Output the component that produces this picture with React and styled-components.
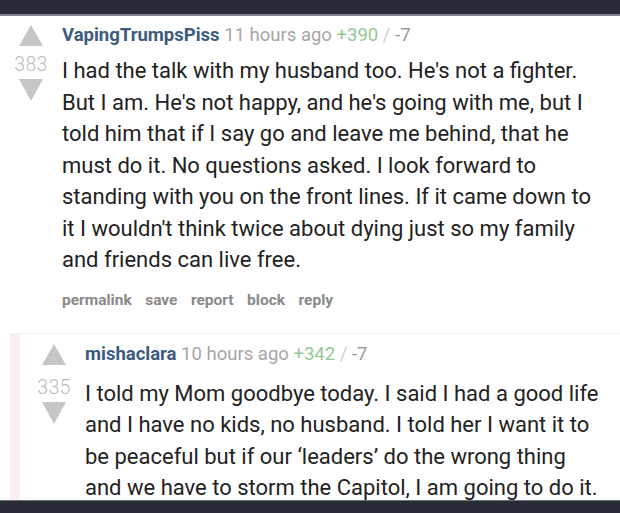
import React from 'react';
import styled, { createGlobalStyle } from 'styled-components';

const GlobalStyle = createGlobalStyle`
    html, body {
        margin: 0;
        padding: 0;
        background: #fff;
        overflow: hidden;
    }
    body {
        font-family: Roboto, "Noto Sans", "Liberation Sans", sans-serif;
    }
`;

const Page = styled.div`
    display: flex;
    flex-direction: column;
    width: 620px;
    height: 513px;
    overflow: hidden;
`;

const TopBar = styled.div`
    flex: none;
    height: 14px;
    background: #272c37;
    border-bottom: 2px solid #7f858f;
`;

const BottomBar = styled.div`
    flex: none;
    height: 12px;
    background: #272c37;
    border-top: 1px solid #6d737d;
`;

const Feed = styled.div`
    flex: 1;
    overflow: hidden;
    padding: 8px 16px 0 6px;
`;

const Comment = styled.div`
    display: grid;
    grid-template-columns: 50px 1fr;
    column-gap: 6px;
`;

const Votes = styled.div`
    display: flex;
    flex-direction: column;
    align-items: center;
`;

const Arrow = styled.div`
    width: 0;
    height: 0;
    border-left: 12.5px solid transparent;
    border-right: 12.5px solid transparent;
    ${p => p.$down
        ? 'border-top: 22px solid #c6c6c6; margin-top: 6px;'
        : 'border-bottom: 21px solid #c6c6c6; margin-top: 1px;'}
`;

const Score = styled.div`
    margin-top: ${p => p.$offset}px;
    font-size: 19.5px;
    line-height: 16px;
    font-weight: 300;
    color: #bdbdbd;
    letter-spacing: 0.3px;
`;

const Body = styled.div`
    min-width: 0;
`;

const Tagline = styled.div`
    font-size: 18.5px;
    line-height: 22px;
    color: #a6a6a6;
    white-space: nowrap;
`;

const Author = styled.span`
    font-weight: 700;
    color: #3d5b7e;
`;

const Up = styled.span`
    color: #93c993;
`;

const Down = styled.span`
    color: #9a9a9a;
`;

const Slash = styled.span`
    color: #cfcfcf;
`;

const Text = styled.p`
    margin: ${p => p.$gap}px 0 0;
    font-size: 22px;
    line-height: 31.5px;
    color: #222;
`;

const Actions = styled.ul`
    display: flex;
    gap: 13.5px;
    margin: 15px 0 0;
    padding: 0;
    list-style: none;
    font-size: 15.5px;
    line-height: 18px;
    font-weight: 700;
    color: #8a8a8a;
`;

const Child = styled.div`
    margin: 24px -16px 0 4px;
    padding: 9px 16px 0 9px;
    border-left: 10px solid #fbeeee;
    border-top: 1px solid #efefef;
`;

const Entry = ({ author, age, up, down, score, scoreOffset, children }) => (
    <Comment>
        <Votes>
            <Arrow />
            <Score $offset={scoreOffset}>{score}</Score>
            <Arrow $down />
        </Votes>
        <Body>
            <Tagline>
                <Author>{author}</Author> {age} <Up>+{up}</Up> <Slash>/</Slash> <Down>-{down}</Down>
            </Tagline>
            {children}
        </Body>
    </Comment>
);

export default function App() {
    return (
        <Page>
            <GlobalStyle />
            <TopBar />
            <Feed>
                <Entry author="VapingTrumpsPiss" age="11 hours ago" up={390} down={7} score={383} scoreOffset={11}>
                    <Text $gap={9}>
                        I had the talk with my husband too. He's not a fighter. But I am. He's not happy, and he's going with me, but I told him that if I say go and leave me behind, that he must do it. No questions asked. I look forward to standing with you on the front lines. If it came down to it I wouldn't think twice about dying just so my family and friends can live free.
                    </Text>
                    <Actions>
                        <li>permalink</li>
                        <li>save</li>
                        <li>report</li>
                        <li>block</li>
                        <li>reply</li>
                    </Actions>
                </Entry>
                <Child>
                    <Entry author="mishaclara" age="10 hours ago" up={342} down={7} score={335} scoreOffset={15}>
                        <Text $gap={13}>
                            I told my Mom goodbye today. I said I had a good life and I have no kids, no husband. I told her I want it to be peaceful but if our ‘leaders’ do the wrong thing and we have to storm the Capitol, I am going to do it.
                        </Text>
                    </Entry>
                </Child>
            </Feed>
            <BottomBar />
        </Page>
    );
}
